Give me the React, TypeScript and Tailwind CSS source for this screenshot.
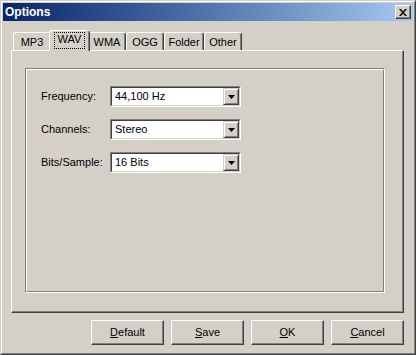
const tabs = [
  { label: "MP3", w: "w-[38px]" },
  { label: "WAV", w: "w-[41px]", active: true },
  { label: "WMA", w: "w-[38px]" },
  { label: "OGG", w: "w-[38px]" },
  { label: "Folder", w: "w-[40px]" },
  { label: "Other", w: "w-[38px]" },
];

const fields = [
  { label: "Frequency:", value: "44,100 Hz" },
  { label: "Channels:", value: "Stereo" },
  { label: "Bits/Sample:", value: "16 Bits" },
];

const buttons = [
  { key: "D", rest: "efault" },
  { key: "S", rest: "ave" },
  { key: "O", rest: "K" },
  { key: "C", rest: "ancel" },
];

function Combo({ value }: { value: string }) {
  return (
    <div className="flex h-[21px] w-[131px] border border-t-[#808080] border-l-[#808080] border-r-white border-b-white">
      <div className="flex flex-1 border border-t-[#404040] border-l-[#404040] border-r-[#d4d0c8] border-b-[#d4d0c8] bg-white">
        <span className="flex-1 pl-[3px] pt-[2px] text-[11px] leading-[13px] text-black">{value}</span>
        <div className="flex h-[17px] w-[16px] items-center justify-center border border-t-[#d4d0c8] border-l-[#d4d0c8] border-r-[#404040] border-b-[#404040] bg-[#d4d0c8] shadow-[inset_1px_1px_0_#ffffff,inset_-1px_-1px_0_#808080]">
          <svg width="7" height="4" viewBox="0 0 7 4">
            <path d="M0 0h7L3.5 4z" fill="#000" />
          </svg>
        </div>
      </div>
    </div>
  );
}

export default function App() {
  return (
    <div className="h-[355px] w-[416px] border border-t-[#d4d0c8] border-l-[#d4d0c8] border-r-[#404040] border-b-[#404040] bg-[#d4d0c8] font-['Liberation_Sans',Arial,sans-serif]">
      <div className="flex h-full flex-col border border-t-white border-l-white border-r-[#808080] border-b-[#808080] p-px">
        {/* title bar */}
        <div className="flex h-[18px] items-center justify-between bg-gradient-to-r from-[#0a246a] to-[#a6caf0] pl-[2px] pr-[2px]">
          <span className="text-[12px] font-bold text-white">Options</span>
          <div className="flex h-[14px] w-[16px] items-center justify-center border border-t-white border-l-white border-r-[#404040] border-b-[#404040] bg-[#d4d0c8] shadow-[inset_-1px_-1px_0_#808080]">
            <svg width="8" height="7" viewBox="0 0 8 7">
              <path d="M0 0h2l2 2.5L6 0h2L5 3.5 8 7H6L4 4.5 2 7H0l3-3.5z" fill="#000" />
            </svg>
          </div>
        </div>

        {/* body */}
        <div className="flex flex-1 flex-col pl-[8px] pt-[9px]">
          <div className="flex h-[20px] items-end pl-[2px]">
            {tabs.map((t) =>
              t.active ? (
                <div
                  key={t.label}
                  className={`relative z-10 -mx-[2px] -mb-px flex h-[21px] ${t.w} items-start justify-center rounded-t-[3px] border-l border-t border-r border-l-white border-t-white border-r-[#404040] bg-[#d4d0c8] pt-[1px] shadow-[inset_-1px_0_0_#808080]`}
                >
                  <span className="border border-dotted border-black px-[3px] pb-[2px] text-[11px] leading-[13px] text-black">{t.label}</span>
                </div>
              ) : (
                <div
                  key={t.label}
                  className={`flex h-[18px] ${t.w} items-start justify-center rounded-t-[3px] border-l border-t border-r border-l-white border-t-white border-r-[#404040] pt-[3px] shadow-[inset_-1px_0_0_#808080]`}
                >
                  <span className="text-[11px] leading-[13px] text-black">{t.label}</span>
                </div>
              )
            )}
          </div>

          {/* tab panel */}
          <div className="h-[263px] w-[393px] border border-t-white border-l-white border-r-[#404040] border-b-[#404040] pl-[13px] pt-[17px] shadow-[inset_-1px_-1px_0_#808080]">
            <div className="h-[225px] w-[360px] border border-t-[#808080] border-l-[#808080] border-r-white border-b-white">
              <div className="flex h-full w-full flex-col gap-[12px] border border-t-white border-l-white border-r-[#808080] border-b-[#808080] pl-[14px] pt-[16px]">
                {fields.map((f) => (
                  <div key={f.label} className="flex items-center">
                    <span className="w-[69px] text-[11px] text-black">{f.label}</span>
                    <Combo value={f.value} />
                  </div>
                ))}
              </div>
            </div>
          </div>

          {/* buttons */}
          <div className="mt-[7px] flex w-[393px] justify-end gap-[7px]">
            {buttons.map((b) => (
              <div
                key={b.key}
                className="flex h-[25px] w-[73px] items-center justify-center border border-t-white border-l-white border-r-[#404040] border-b-[#404040] shadow-[inset_-1px_-1px_0_#808080] text-[11px] text-black"
              >
                <span>
                  <span className="underline">{b.key}</span>
                  {b.rest}
                </span>
              </div>
            ))}
          </div>
        </div>
      </div>
    </div>
  );
}
